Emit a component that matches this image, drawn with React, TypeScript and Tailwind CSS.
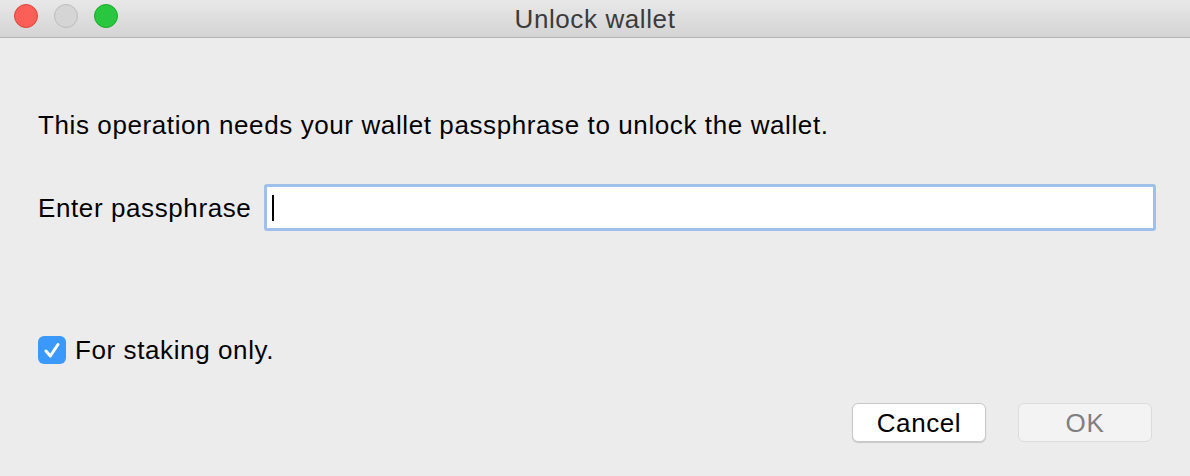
import React from "react";

export default function App() {
  return (
    <div
      className="w-[1190px] h-[476px] bg-[#ececec] flex flex-col overflow-hidden"
      style={{ fontFamily: '"Liberation Sans", Arial, sans-serif' }}
    >
      <div className="h-[38px] shrink-0 bg-gradient-to-b from-[#e9e8e9] to-[#d5d4d5] border-b border-[#b5b5b5] relative flex items-center justify-center">
        <div className="absolute left-[14px] top-[4px] flex gap-[16px]">
          <div className="w-[24px] h-[24px] rounded-full bg-[#fc5f57] border border-[#e0443e]" />
          <div className="w-[24px] h-[24px] rounded-full bg-[#d6d5d6] border border-[#bdbcbd]" />
          <div className="w-[24px] h-[24px] rounded-full bg-[#29c73f] border border-[#1aab29]" />
        </div>
        <span className="text-[26px] tracking-[0.6px] text-[#3b3b3b] leading-none">Unlock wallet</span>
      </div>
      <div className="flex flex-col px-[38px] text-[26px] tracking-[0.6px] leading-[28px]">
        <p className="mt-[73px] text-black">
          This operation needs your wallet passphrase to unlock the wallet.
        </p>
        <div className="mt-[45px] flex items-center">
          <span className="text-black w-[226px]">Enter passphrase</span>
          <div className="flex-1 mr-[-4px] h-[47px] rounded-[3px] bg-[#9ec0ea] p-[3px]">
            <div className="w-full h-full bg-white flex items-center pl-[5px]">
              <div className="w-[2px] h-[26px] bg-black" />
            </div>
          </div>
        </div>
        <div className="mt-[105px] flex items-center gap-[9px]">
          <div className="w-[28px] h-[28px] rounded-[6px] bg-[#3b99fc] flex items-center justify-center">
            <svg width="28" height="28" viewBox="0 0 28 28">
              <path d="M8 15 L12.3 20 L20 8.5" fill="none" stroke="white" strokeWidth="3" strokeLinecap="round" strokeLinejoin="round" />
            </svg>
          </div>
          <span className="text-black">For staking only.</span>
        </div>
        <div className="mt-[39px] flex justify-end gap-[32px]">
          <button className="w-[134px] h-[39px] rounded-[6px] bg-white border border-[#c8c8c8] shadow-[0_1px_1px_rgba(0,0,0,0.15)] text-black tracking-[0.6px]">
            Cancel
          </button>
          <button className="w-[134px] h-[39px] rounded-[6px] bg-[#f3f3f3] border border-[#dcdcdc] text-[#7f7f7f] tracking-[0.6px]">
            OK
          </button>
        </div>
      </div>
    </div>
  );
}
